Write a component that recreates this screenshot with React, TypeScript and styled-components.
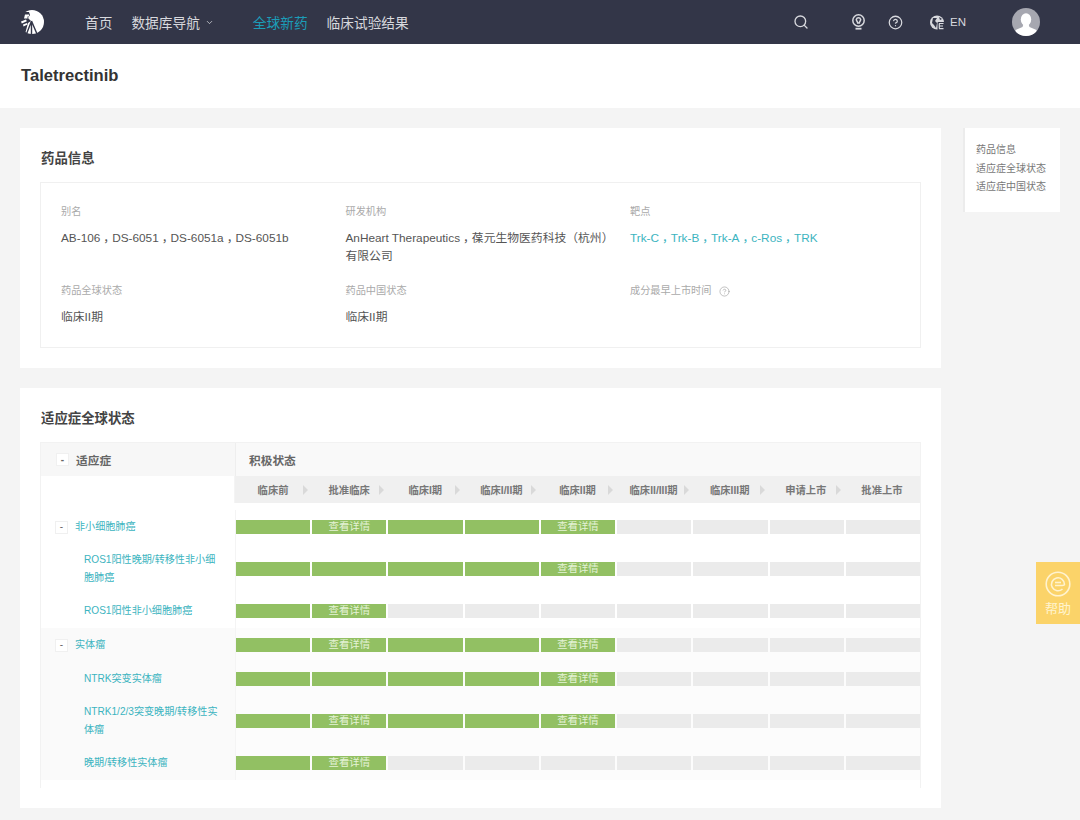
import { Search, ChevronDown, CircleHelp } from "lucide-react";
import styled, { createGlobalStyle } from "styled-components";

const GlobalStyle = createGlobalStyle`
  html, body {
    margin: 0;
    padding: 0;
    background-color: #f4f4f4;
  }

  body {
    font-family: "Liberation Sans", "Noto Sans CJK SC", sans-serif;
    color: #555;
  }
`;

const Header = styled.header`
  display: flex;
  align-items: center;
  height: 44px;
  padding-left: 20px;
  background-color: #333648;
  color: #d8d9de;
`;

const NavLink = styled.a<{ $active?: boolean }>`
  display: flex;
  align-items: center;
  gap: 5px;
  font-size: 13.7px;
  color: ${(p) => (p.$active ? "#1b9db8" : "#d8d9de")};
`;

const Nav = styled.nav`
  display: flex;
  align-items: center;
  margin-left: 41px;
  gap: 19px;

  ${NavLink}:nth-child(3) {
    margin-left: 20px;
  }
`;

const HeaderTools = styled.div`
  display: flex;
  align-items: center;
  margin-left: auto;
  padding-right: 40px;
`;

const ToolIcon = styled.span<{ $gap: number }>`
  display: flex;
  margin-left: ${(p) => p.$gap}px;
`;

const Lang = styled.span`
  margin-left: 5px;
  font-size: 11.5px;
`;

const Avatar = styled.span`
  display: block;
  width: 28px;
  height: 28px;
  margin-left: 46px;
`;

const TitleBand = styled.div`
  height: 64px;
  padding-left: 21px;
  background-color: #fff;
`;

const DrugName = styled.h1`
  margin: 0;
  padding-top: 22px;
  font-size: 16.6px;
  line-height: 20px;
  color: #333;
`;

const Main = styled.main`
  display: flex;
  align-items: flex-start;
  gap: 22px;
  padding: 20px 20px 12px;
`;

const Content = styled.div`
  display: flex;
  flex: none;
  flex-direction: column;
  gap: 20px;
  width: 921px;
`;

const Card = styled.section`
  padding: 20px;
  background-color: #fff;
`;

const SectionTitle = styled.h2`
  margin: 0 0 12px 1px;
  font-size: 13.4px;
  line-height: 22px;
  color: #444;
`;

const InfoBox = styled.div`
  display: grid;
  grid-template-columns: repeat(3, 284.5px);
  row-gap: 17px;
  padding: 20px 20px 21px;
  border: 1px solid #f0f0f0;
`;

const InfoItem = styled.div`
  min-height: 36px;
`;

const InfoLabel = styled.div`
  display: flex;
  align-items: center;
  gap: 7px;
  margin-bottom: 8px;
  font-size: 10.2px;
  line-height: 18px;
  color: #aaa;

  svg {
    color: #999;
  }
`;

const InfoValue = styled.div<{ $link?: boolean }>`
  width: 272px;
  font-size: 11.8px;
  line-height: 18px;
  color: ${(p) => (p.$link ? "#3cb4c0" : "#555")};
`;

const Comma = styled.span`
  margin-left: 3px;
  margin-right: -3px;
`;

const SideNav = styled.aside`
  flex: none;
  box-sizing: border-box;
  width: 97px;
  padding: 13px 0 15px 11px;
  background-color: #fff;
  border-left: 2px solid #ececec;
`;

const SideItem = styled.div`
  font-size: 10px;
  line-height: 18.5px;
  color: #777;
`;

const Table = styled.div`
  border: 1px solid #f2f2f2;
  border-bottom: 0;
  padding-bottom: 8px;
`;

const TableRow = styled.div`
  display: grid;
  grid-template-columns: 194px 1fr;
`;

const HeadLeft = styled.div`
  display: flex;
  align-items: center;
  gap: 7px;
  height: 33px;
  padding-left: 15px;
  background-color: #f7f7f7;
  font-size: 11.7px;
  font-weight: 700;
  color: #666;
`;

const HeadRight = styled.div`
  display: flex;
  align-items: center;
  padding-left: 13px;
  border-left: 1px solid #eee;
  background-color: #f9f9f9;
  font-size: 11.7px;
  font-weight: 700;
  color: #666;
`;

const Toggle = styled.span`
  display: flex;
  align-items: center;
  justify-content: center;
  flex: none;
  box-sizing: border-box;
  width: 13px;
  height: 13px;
  background-color: #fff;
  border: 1px solid #f0f0f0;
  font-size: 10px;
  line-height: 1;
  color: #666;
`;

const Spacer = styled.div`
  border-right: 1px solid #f4f4f4;
`;

const PhaseRow = styled.div`
  display: grid;
  grid-template-columns: repeat(9, 1fr);
  height: 27px;
  background-color: #f0f0f0;
`;

const Phase = styled.div`
  display: grid;
  grid-template-columns: 1fr auto 1fr;
  align-items: center;
  font-size: 10.3px;
  font-weight: 700;
  color: #777;
`;

const PhaseName = styled.span`
  grid-column: 2;
  white-space: nowrap;
`;

const PhaseArrow = styled.i`
  grid-column: 3;
  justify-self: end;
  margin-right: 3px;
  width: 0;
  height: 0;
  border-style: solid;
  border-width: 5px 0 5px 5px;
  border-color: transparent transparent transparent #d9d9d9;
`;

const Body = styled.div`
  padding-top: 7px;
`;

const RowLabel = styled.div<{ $child?: boolean; $shade?: boolean; $tall?: boolean }>`
  display: flex;
  align-items: center;
  gap: 7px;
  height: ${(p) => (p.$tall ? 50 : 34)}px;
  padding-left: ${(p) => (p.$child ? 43 : 14)}px;
  padding-right: ${(p) => (p.$child ? 16 : 0)}px;
  background-color: ${(p) => (p.$shade ? "#fafafa" : "#fff")};
  font-size: 10.1px;
  line-height: 18px;
  color: #3cb4c0;
`;

const Bars = styled.div<{ $shade?: boolean }>`
  display: grid;
  grid-template-columns: repeat(9, 1fr);
  column-gap: 2px;
  align-items: center;
  border-left: 1px solid #f4f4f4;
  background-color: ${(p) => (p.$shade ? "#fcfcfc" : "#fff")};
`;

const Bar = styled.div<{ $done?: boolean }>`
  height: 14px;
  background-color: ${(p) => (p.$done ? "#92c063" : "#ebebeb")};
  font-size: 10.4px;
  line-height: 14px;
  text-align: center;
  color: #e4f2d5;
`;

const HelpButton = styled.div`
  position: fixed;
  top: 562px;
  right: 0;
  display: flex;
  flex-direction: column;
  align-items: center;
  gap: 3px;
  width: 44px;
  height: 62px;
  padding-top: 9px;
  box-sizing: border-box;
  background-color: #fbd369;
  font-size: 13px;
  line-height: 18px;
  color: #fff3cf;
`;

const phases = ["临床前", "批准临床", "临床I期", "临床I/II期", "临床II期", "临床II/III期", "临床III期", "申请上市", "批准上市"];

const rows = [
  { name: "非小细胞肺癌", toggle: true, done: 5, details: [1, 4] },
  { name: "ROS1阳性晚期/转移性非小细胞肺癌", tall: true, done: 5, details: [4] },
  { name: "ROS1阳性非小细胞肺癌", done: 2, details: [1] },
  { name: "实体瘤", toggle: true, shade: true, done: 5, details: [1, 4] },
  { name: "NTRK突变实体瘤", shade: true, done: 5, details: [4] },
  { name: "NTRK1/2/3突变晚期/转移性实体瘤", tall: true, shade: true, done: 5, details: [1, 4] },
  { name: "晚期/转移性实体瘤", shade: true, done: 2, details: [1] },
];

// full-width commas sit a little to the right in the original font
const withCommas = (text: string) =>
  text.split("，").map((part, i) => (
    <span key={part}>
      {i > 0 && <Comma>，</Comma>}
      {part}
    </span>
  ));

const Logo = () => (
  <svg width="24" height="24" viewBox="0 0 24 24">
    <circle cx="12" cy="12" r="12" fill="#fff" />
    <path d="M0 2h9l1 3-2 3 3 3-3 2-3 11H0z" fill="#333648" />
    <path d="M5 4.5h4v2H7.500v2H4zM1 11.500l5-2 .8 1.800-5 2.200zM3 14.500l4-1.500.5 1.500-4 2z" fill="#fff" />
    <path d="M11.500 11L6.500 24M11.500 11l5.500 13M11.500 11v13" stroke="#333648" strokeWidth="1.400" fill="none" />
  </svg>
);

const BulbIcon = () => (
  <svg width="15" height="16" viewBox="0 0 15 16" fill="none" stroke="#d8d9de" strokeWidth="1.500">
    <circle cx="7.500" cy="6.500" r="5.700" />
    <path d="M5.300 5.500a2.300 2.300 0 0 1 4.400 0c0 1.500-1.400 2-1.400 3.500H6.700c0-1.500-1.400-2-1.400-3.500z" />
    <path d="M4.500 14.700h6" strokeWidth="1.800" />
  </svg>
);

const GlobeIcon = () => (
  <svg width="15" height="15" viewBox="0 0 15 15">
    <circle cx="7" cy="7.500" r="7" fill="#d8d9de" />
    <path d="M3 3h4L5 6l2 2-1 5-2-3-2-2zM9 2l3 2-2 1z" fill="#333648" />
    <rect x="7.500" y="7" width="7.500" height="8" rx="1" fill="#333648" />
    <path d="M9 8.500h4.500M9 11h4M9 13.600h4.500M9.300 8.500v5" stroke="#d8d9de" strokeWidth="1.200" fill="none" />
  </svg>
);

const AvatarIcon = () => (
  <svg width="28" height="28" viewBox="0 0 28 28">
    <defs>
      <clipPath id="avatar-clip">
        <circle cx="14" cy="14" r="14" />
      </clipPath>
    </defs>
    <circle cx="14" cy="14" r="14" fill="#a6a7b0" />
    <g clipPath="url(#avatar-clip)" fill="#fff">
      <ellipse cx="14" cy="11.500" rx="5.200" ry="6.300" />
      <path d="M11.500 16h5l1 3 7 3v6H3.500v-6l7-3z" />
    </g>
  </svg>
);

const HelpIcon = () => (
  <svg width="26" height="26" viewBox="0 0 26 26" fill="none" stroke="#fff3cf" strokeWidth="1.600">
    <circle cx="13" cy="13" r="11.800" />
    <path d="M17.500 18a6.500 6.500 0 1 1 2-4.500c0 1.500-6 1-9.500 1" />
    <path d="M10 11.500h6" />
  </svg>
);

const App = () => {
  return (
    <>
      <GlobalStyle />
      <Header>
        <Logo />
        <Nav>
          <NavLink>首页</NavLink>
          <NavLink>
            数据库导航
            <ChevronDown size={9} strokeWidth={2} />
          </NavLink>
          <NavLink $active>全球新药</NavLink>
          <NavLink>临床试验结果</NavLink>
        </Nav>
        <HeaderTools>
          <ToolIcon $gap={0}>
            <Search size={16} strokeWidth={2} />
          </ToolIcon>
          <ToolIcon $gap={42}>
            <BulbIcon />
          </ToolIcon>
          <ToolIcon $gap={22}>
            <CircleHelp size={15} strokeWidth={2} />
          </ToolIcon>
          <ToolIcon $gap={27}>
            <GlobeIcon />
          </ToolIcon>
          <Lang>EN</Lang>
          <Avatar>
            <AvatarIcon />
          </Avatar>
        </HeaderTools>
      </Header>

      <TitleBand>
        <DrugName>Taletrectinib</DrugName>
      </TitleBand>

      <Main>
        <Content>
          <Card>
            <SectionTitle>药品信息</SectionTitle>
            <InfoBox>
              <InfoItem>
                <InfoLabel>别名</InfoLabel>
                <InfoValue>{withCommas("AB-106，DS-6051，DS-6051a，DS-6051b")}</InfoValue>
              </InfoItem>
              <InfoItem>
                <InfoLabel>研发机构</InfoLabel>
                <InfoValue>{withCommas("AnHeart Therapeutics，葆元生物医药科技（杭州）有限公司")}</InfoValue>
              </InfoItem>
              <InfoItem>
                <InfoLabel>靶点</InfoLabel>
                <InfoValue $link>{withCommas("Trk-C，Trk-B，Trk-A，c-Ros，TRK")}</InfoValue>
              </InfoItem>
              <InfoItem>
                <InfoLabel>药品全球状态</InfoLabel>
                <InfoValue>临床II期</InfoValue>
              </InfoItem>
              <InfoItem>
                <InfoLabel>药品中国状态</InfoLabel>
                <InfoValue>临床II期</InfoValue>
              </InfoItem>
              <InfoItem>
                <InfoLabel>
                  成分最早上市时间
                  <CircleHelp size={11} strokeWidth={1.3} />
                </InfoLabel>
              </InfoItem>
            </InfoBox>
          </Card>

          <Card>
            <SectionTitle>适应症全球状态</SectionTitle>
            <Table>
              <TableRow>
                <HeadLeft>
                  <Toggle>-</Toggle>
                  适应症
                </HeadLeft>
                <HeadRight>积极状态</HeadRight>
              </TableRow>
              <TableRow>
                <Spacer />
                <PhaseRow>
                  {phases.map((phase, i) => (
                    <Phase key={phase}>
                      <PhaseName>{phase}</PhaseName>
                      {i < phases.length - 1 && <PhaseArrow />}
                    </Phase>
                  ))}
                </PhaseRow>
              </TableRow>
              <Body>
                {rows.map((row) => (
                  <TableRow key={row.name}>
                    <RowLabel $child={!row.toggle} $shade={row.shade} $tall={row.tall}>
                      {row.toggle && <Toggle>-</Toggle>}
                      <span>{row.name}</span>
                    </RowLabel>
                    <Bars $shade={row.shade}>
                      {phases.map((phase, i) => (
                        <Bar key={phase} $done={i < row.done}>
                          {row.details.includes(i) ? "查看详情" : ""}
                        </Bar>
                      ))}
                    </Bars>
                  </TableRow>
                ))}
              </Body>
            </Table>
          </Card>
        </Content>

        <SideNav>
          <SideItem>药品信息</SideItem>
          <SideItem>适应症全球状态</SideItem>
          <SideItem>适应症中国状态</SideItem>
        </SideNav>
      </Main>

      <HelpButton>
        <HelpIcon />
        帮助
      </HelpButton>
    </>
  );
};

export default App;
